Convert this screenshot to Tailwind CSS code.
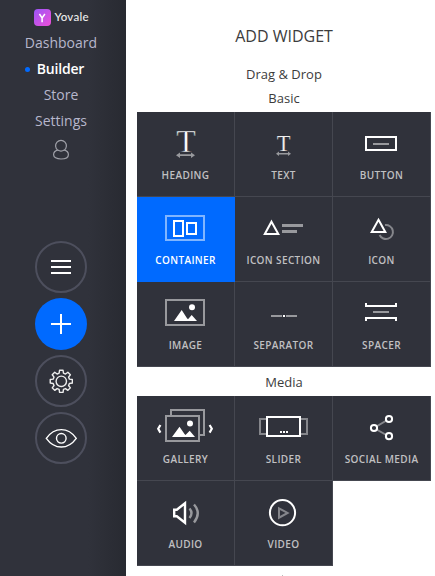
<!DOCTYPE html>
<html lang="en">
<head>
<meta charset="utf-8">
<title>Yovale Builder</title>
<script src="https://cdn.jsdelivr.net/npm/@tailwindcss/browser@4"></script>
</head>
<body class="flex h-[576px] w-[435px] overflow-hidden bg-white font-['Open_Sans','Noto_Sans',sans-serif]">
<aside class="flex h-full w-[126px] shrink-0 flex-col items-center bg-[#30323b] bg-linear-to-r from-[#30323b] from-70% to-[#282a31] pt-2 pr-1">
  <div class="flex h-[18px] items-center gap-1 pl-px">
    <svg class="h-[17px] w-[17px]" viewBox="0 0 17 17"><defs><linearGradient id="lg" x1="0" y1="0" x2="1" y2="1"><stop offset="0" stop-color="#9a55f8"/><stop offset="1" stop-color="#ef50d8"/></linearGradient></defs><rect width="17" height="17" rx="4" fill="url(#lg)"/><path d="M5.4 5L8.1 9L10.9 5M8.1 9V13.3" fill="none" stroke="#fff" stroke-width="1.5"/></svg>
    <span class="w-[35px] font-[Lato] text-[11.5px] leading-[18px] font-medium tracking-[0.25px] text-[#eee]">Yovale</span>
  </div>
  <nav class="mt-1 flex flex-col items-center text-[14px] leading-[26px] text-[#b7b7cc]">
    <a>Dashboard</a>
    <a class="flex items-center gap-[7px] pr-[13px] font-semibold tracking-[-0.2px] text-white"><i class="h-[5px] w-[5px] rounded-full bg-[#006aff]"></i>Builder</a>
    <a>Store</a>
    <a>Settings</a>
  </nav>
  <svg class="mt-[5px] h-[22px] w-5 shrink-0" viewBox="0 0 20 22" fill="none" stroke="#a0a1a9" stroke-width="1.2"><path d="M6.7 11.1A5.4 5.4 0 1 1 13.3 11.1C16 11.7 17.4 13.5 17.4 15.7C17.4 18.3 14.5 20 10 20S2.6 18.3 2.6 15.7C2.6 13.5 4 11.7 6.7 11.1Q10 13.2 13.3 11.1"/></svg>
  <div class="mt-20 flex flex-col gap-[5px]">
    <button class="flex h-[52px] w-[52px] items-center justify-center rounded-full border-2 border-[#4d4f5d]"><svg class="h-5 w-5" viewBox="0 0 20 20" fill="#fff"><path d="M0 3h20v2H0zM0 9h20v2H0zM0 15h20v2H0z"/></svg></button>
    <button class="flex h-[52px] w-[52px] items-center justify-center rounded-full bg-[#006aff]"><svg class="h-5 w-5" viewBox="0 0 20 20" fill="#fff"><path d="M9 0h2v9h9v2h-9v9H9v-9H0V9h9z"/></svg></button>
    <button class="flex h-[52px] w-[52px] items-center justify-center rounded-full border-2 border-[#4d4f5d]"><svg id="gear" class="h-6 w-6" viewBox="0 0 24 24" fill="none" stroke="#eee" stroke-width="1.4" stroke-linejoin="round"><path d=""/><circle cx="12.3" cy="12.3" r="5.2"/></svg></button>
    <button class="flex h-[52px] w-[52px] items-center justify-center rounded-full border-2 border-[#4d4f5d]"><svg class="h-5 w-8" viewBox="0 0 32 20" fill="none" stroke="#fff" stroke-width="1.4"><path d="M1.3 10.3Q7.5 1.6 16.3 1.6T31.3 10.3Q25 19 16.3 19T1.3 10.3Z"/><circle cx="16.3" cy="10.3" r="4.8"/></svg></button>
  </div>
</aside>
<main class="flex w-[309px] flex-col pl-[11px] text-center text-[13px] text-[#3c3c3c]">
  <h1 class="mt-6 w-[294px] text-[16px] leading-6">ADD WIDGET</h1>
  <p class="mt-4 w-[294px] leading-5">Drag &amp; Drop</p>
  <h2 class="mt-1 mb-1 w-[294px] leading-5">Basic</h2>
  <section id="basic" class="grid w-[294px] grid-cols-3">
    <div class="tile"><svg viewBox="0 0 98 54"><text x="49" y="40.3" text-anchor="middle" font-family="Liberation Serif" font-size="32" fill="#fff" stroke="#30323b" stroke-width=".5">T</text><path d="M39 43.2l4-2.8v1.9h11v-1.9l4 2.8-4 2.8v-1.9H43V46z" fill="#98999d"/></svg><span>HEADING</span></div>
    <div class="tile"><svg viewBox="0 0 98 54"><text x="48.5" y="39" text-anchor="middle" font-family="Liberation Serif" font-size="22.5" fill="#eee" stroke="#30323b" stroke-width=".2">T</text><path d="M41 41.7l3-2.2v1.5h9v-1.5l3 2.2-3 2.2v-1.5h-9v1.5z" fill="#98999d"/></svg><span>TEXT</span></div>
    <div class="tile"><svg viewBox="0 0 98 54" fill="none" stroke="#fff" stroke-width="2"><path d="M33 25h30v13H33z"/><path d="M40 32h16" stroke="#98999d"/></svg><span>BUTTON</span></div>
    <div class="tile active"><svg viewBox="0 0 98 54" fill="none" stroke="#fff" stroke-width="2"><path d="M29 19h38v24H29z" stroke="#80b5ff"/><path d="M37 24h9v15h-9zM50 26h9v11h-9z"/></svg><span>CONTAINER</span></div>
    <div class="tile"><svg viewBox="0 0 98 54"><path d="M36.5 24.7L43.3 37H29.8z" fill="none" stroke="#fff" stroke-width="2"/><path d="M47 27h21v3H47zM47 33h15v3H47z" fill="#98999d"/></svg><span>ICON SECTION</span></div>
    <div class="tile"><svg viewBox="0 0 98 54" fill="none" stroke-width="2"><path d="M52 28.1A7 7 0 1 1 46.6 38" stroke="#85868b"/><path d="M45.5 22.8L52.3 35H38.7z" stroke="#fff"/></svg><span>ICON</span></div>
    <div class="tile"><svg viewBox="0 0 98 54" fill="#fff"><path d="M29 18h38v25H29z" fill="none" stroke="#98999d" stroke-width="2"/><path d="M37 39l7.7-11L50 36.3l1 1 3.7-4.3 5.3 6z"/><circle cx="55" cy="25.2" r="3"/></svg><span>IMAGE</span></div>
    <div class="tile"><svg viewBox="0 0 98 54"><path d="M36 33h11v2H36zM51 33h11v2H51z" fill="#98999d"/><path d="M48 33h2v2h-2z" fill="#fff"/></svg><span>SEPARATOR</span></div>
    <div class="tile"><svg viewBox="0 0 98 54" fill="none" stroke="#fff" stroke-width="2"><path d="M33 21v3h30v-3M33 39v-3h30v3"/><path d="M40 30h16" stroke="#98999d"/></svg><span>SPACER</span></div>
  </section>
  <h2 class="mt-[5px] mb-1 w-[294px] leading-5">Media</h2>
  <section id="media" class="grid w-[294px] grid-cols-3">
    <div class="tile"><svg viewBox="0 0 98 54" fill="#fff"><path d="M34 19v-5h33v25h-4M29 20h33v25H29z" fill="none" stroke="#98999d" stroke-width="2"/><path d="M35 41l7.5-10.3L47.5 38l1 1 4.2-4.2L58 41z"/><circle cx="53" cy="27.4" r="3"/><path d="M23.4 29l-2.2 3.8 2.2 3.8M72.6 29l2.2 3.8-2.2 3.8" fill="none" stroke="#fff" stroke-width="2.2"/></svg><span>GALLERY</span></div>
    <div class="tile"><svg viewBox="0 0 98 54" fill="none" stroke-width="2"><path d="M31 23h-6v15h6M66 23h6v15h-6" stroke="#85868b"/><path d="M32 21h33v19H32z" stroke="#fff"/><path d="M45 36h2M48 36h2M51 36h2" stroke="#fff"/></svg><span>SLIDER</span></div>
    <div class="tile"><svg viewBox="0 0 98 54" fill="none" stroke="#fff" stroke-width="2"><path d="M56 23L41 32l15 8.5" stroke="#85868b"/><g fill="#30323b"><circle cx="41" cy="32" r="3.1"/><circle cx="56" cy="23" r="3.1"/><circle cx="56" cy="40.2" r="3.1"/></g></svg><span>SOCIAL MEDIA</span></div>
    <div class="tile"><svg viewBox="0 0 98 54" fill="none" stroke-width="2.4"><path d="M37.2 28.7h2.6l8.2-6.4v19.4l-8.2-6.4h-2.6z" stroke="#fff"/><path d="M52.5 27.5Q56.5 32 52.5 37M57 23.5Q64.5 32 57 41.5" stroke="#98999d"/></svg><span>AUDIO</span></div>
    <div class="tile"><svg viewBox="0 0 98 54" fill="none" stroke-width="2"><circle cx="47.5" cy="31.7" r="12.6" stroke="#fff"/><path d="M44 27.3l8.6 4.6-8.6 4.8z" stroke="#85868b"/></svg><span>VIDEO</span></div>
  </section>
  <i class="mt-[9px] ml-[145px] h-px w-px bg-[#bbb]"></i>
</main>
<script>
document.querySelectorAll('.tile').forEach(t => {
  t.className = 'flex h-[85px] w-[98px] flex-col items-center border-r border-b ' + (t.classList.contains('active')
    ? 'border-[#006aff] bg-[#006aff] text-white' : 'border-[#454750] bg-[#30323b] text-[#c0c0c2]');
  t.querySelector('svg').setAttribute('class', 'h-[54px] w-[98px] shrink-0');
  t.querySelector('span').className = 'text-[10px] leading-[18px] font-semibold tracking-[0.38px] whitespace-nowrap';
});
// Eight-tooth gear outline around the hub
const pts = [];
for (let i = 0; i < 8; i++) {
  for (const [o, r] of [[-15, 8.4], [-9, 11.2], [9, 11.2], [15, 8.4]]) {
    const a = (i * 45 + o) * Math.PI / 180;
    pts.push((12.3 + r * Math.sin(a)).toFixed(2) + ' ' + (12.3 - r * Math.cos(a)).toFixed(2));
  }
}
document.querySelector('#gear path').setAttribute('d', 'M' + pts.join('L') + 'Z');
</script>
</body>
</html>
